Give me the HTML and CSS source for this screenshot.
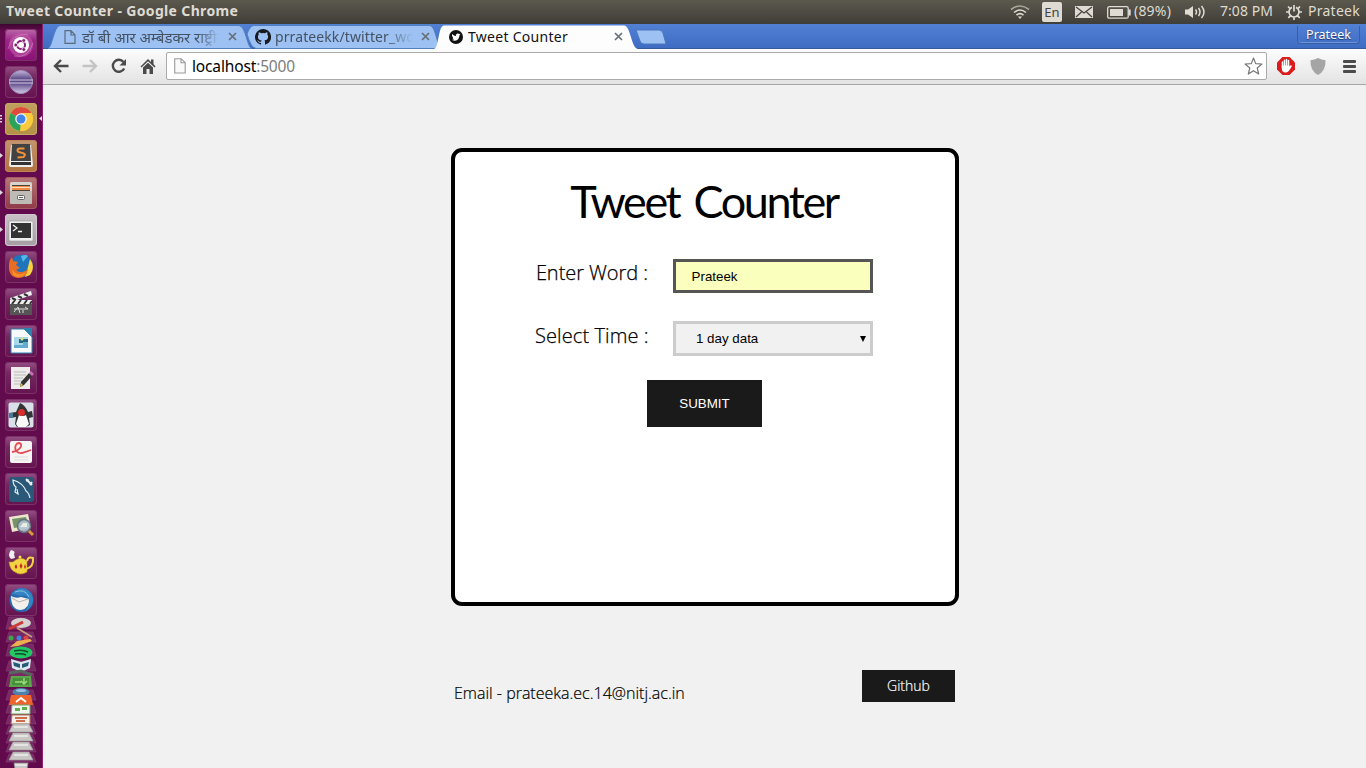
FILE: index.html
```html
<!DOCTYPE html>
<html lang="en">
<head>
<meta charset="utf-8">
<title>Tweet Counter</title>
<link rel="stylesheet" href="styles.css">
</head>
<body>
<div class="desktop">
<header class="panel">
  <span class="panel-title">Tweet Counter - Google Chrome</span>
  <div class="indicators">
    <svg class="i-wifi" width="20" height="16" viewBox="0 0 20 16" fill="none" stroke="#dfdbd2" stroke-width="1.6"><path d="M1 5.5Q10-1.5 19 5.5" stroke="#aaa69d"/><path d="M4 8.5Q10 3.5 16 8.5"/><path d="M6.500 11.200Q10 8.200 13.500 11.200"/><path d="M8 12.500h4l-2 2.500z" fill="#dfdbd2" stroke="none"/></svg>
    <span class="lang">En</span>
    <svg class="i-mail" width="18" height="12" viewBox="0 0 18 12"><rect width="18" height="12" fill="#dfdbd2"/><path d="M1 1l8 6 8-6M1 11l5.500-5M17 11l-5.500-5" fill="none" stroke="#45433d" stroke-width="1.200"/></svg>
    <svg class="i-battery" width="24" height="13" viewBox="0 0 24 13"><rect x=".7" y=".7" width="20.500" height="11.500" rx="1.500" fill="none" stroke="#dfdbd2" stroke-width="1.300"/><rect x="3" y="3" width="13" height="7" fill="#dfdbd2"/><rect x="21.500" y="3.500" width="2.200" height="6" fill="#dfdbd2"/></svg>
    <span class="battery-text">(89%)</span>
    <svg class="i-sound" width="21" height="14" viewBox="0 0 21 14" fill="none" stroke="#dfdbd2" stroke-width="1.500"><path d="M0 4.500h3L8 1v12L3 9.500H0z" fill="#dfdbd2" stroke="none"/><path d="M10.500 4.500Q12.500 7 10.500 9.500M13.500 3Q16.500 7 13.500 11M16.500 1Q21.500 7 16.500 13"/></svg>
    <span class="clock">7:08 PM</span>
    <svg class="i-gear" width="16" height="16" viewBox="0 0 16 16" fill="none" stroke="#dfdbd2" stroke-width="1.700"><path d="M6 3.400A5 5 0 1 0 10 3.400M8 1v6.500M2 2.500l2.200 2.200M14 2.500l-2.200 2.200M0 8h3M13 8h3M2.300 13.800l2.200-2.200M13.700 13.800l-2.200-2.200M8 13v3"/></svg>
    <span class="user">Prateek</span>
  </div>
</header>
<div class="workspace">
<nav class="launcher">
  <div class="tile t-ubuntu"><svg viewBox="0 0 32 32"><circle cx="16" cy="16" r="12" fill="#c15aa9" opacity=".6"/><path d="M3 20Q7 5 23 5M9 27Q23 30 28 14" fill="none" stroke="#d998ca" opacity=".5"/><circle cx="16" cy="16" r="8" fill="#fff"/><circle cx="16" cy="16" r="4" fill="none" stroke="#841b70" stroke-width="2"/><g fill="#841b70" stroke="#fff" stroke-width=".8"><circle cx="10.800" cy="16" r="1.900"/><circle cx="18.800" cy="11.500" r="1.900"/><circle cx="18.800" cy="20.500" r="1.900"/></g></svg></div>
  <div class="tile"><svg viewBox="0 0 32 32"><defs><linearGradient id="ecl" x1="0" y1="0" x2="0" y2="1"><stop stop-color="#c3b8dd"/><stop offset=".4" stop-color="#55427f"/><stop offset=".6" stop-color="#6a5894"/><stop offset="1" stop-color="#d6cdea"/></linearGradient></defs><circle cx="16" cy="16" r="11.500" fill="url(#ecl)" stroke="#9d8ab6"/><path d="M4 14h24M4 17h24" stroke="#d5cbe6"/></svg></div>
  <div class="tile t-chrome"><svg viewBox="0 0 32 32"><circle cx="16" cy="16" r="12" fill="#f9cb3c"/><path d="M16 16L5.600 10A12 12 0 0 1 26.400 10z" fill="#de4b3e"/><path d="M16 16L5.600 10A12 12 0 0 0 15 28z" fill="#2aa45c"/><path d="M16 10h10.400A12 12 0 0 1 15 28l6-9z" fill="#f9cb3c"/><circle cx="16" cy="16" r="5.800" fill="#f4f4f4"/><circle cx="16" cy="16" r="4.500" fill="#4285e8"/></svg></div>
  <div class="tile t-sublime"><svg viewBox="0 0 32 32"><path d="M6 5h20l2 20q0 2-2 2H6q-2 0-2-2z" fill="#eee"/><path d="M7 4h18l1 17H6z" fill="#424242"/><path d="M6 22h20v3H6z" fill="#333"/><path d="M19.500 8.500H15q-2.500 0-2.500 1.800t3 2.200 4 1.500-1 3l-6 .5" fill="none" stroke="#ef933e" stroke-width="2"/></svg></div>
  <div class="tile t-files"><svg viewBox="0 0 32 32"><rect x="5" y="5" width="22" height="10" rx="1.500" fill="#d7d4cd"/><rect x="7" y="8" width="18" height="6" fill="#4b4137"/><path d="M7 9h18v4H7z" fill="#f28b43"/><path d="M7 10.500h18" stroke="#fbe2c1"/><rect x="5" y="14" width="22" height="13" rx="1" fill="#bebbb6"/><rect x="12.500" y="18.500" width="7" height="4" rx="1" fill="#f1f1f0" stroke="#666"/><path d="M14 20.500h4" stroke="#666"/></svg></div>
  <div class="tile t-terminal"><svg viewBox="0 0 32 32"><rect x="4" y="7" width="24" height="20" rx="1" fill="#eee" stroke="#999" stroke-width=".6"/><rect x="6" y="9" width="20" height="15" fill="#333"/><path d="M8 11l4 3-4 3M13 17.500h4" fill="none" stroke="#f4f4f4" stroke-width="1.300"/></svg></div>
  <div class="tile"><svg viewBox="0 0 32 32"><circle cx="16.500" cy="15" r="11.200" fill="#1e75bc"/><path d="M16 5q5-2 7 0l-5 6z" fill="#55b9e8"/><path d="M25 8Q31 16 25 24L20 26 23 16z" fill="#f9d13c"/><path d="M7 6l1 4 5 1-2 3 4 3-4 2q6 5 12-1-1 9-10 9Q3 26 4 14 4 9 7 6z" fill="#e96c25"/><path d="M7 18q4 7 10 5l5-2Q16 29 8 24z" fill="#f69028"/></svg></div>
  <div class="tile"><svg viewBox="0 0 32 32"><rect x="5" y="14" width="22" height="13" fill="#555"/><path d="M5 10L26 3l1 4L6 14z" fill="#eee"/><path d="M5 12h22v4H5z" fill="#eee"/><path d="M7 10l4 2M13 8l4 2M19 6l4 2M7 16l3-4M13 16l3-4M19 16l3-4M25 16l2-3" stroke="#333" stroke-width="2"/><path d="M9 21h14l-3-2M9 24l4-5 2 6M18 22v3" stroke="#ddd" fill="none"/></svg></div>
  <div class="tile"><svg viewBox="0 0 32 32"><path d="M6 4h13l8 8v16H6z" fill="#f7fbfb" stroke="#2b82ac"/><path d="M18 3h9v9z" fill="#2b82ac"/><rect x="9" y="12" width="14" height="11" fill="#a8d9eb"/><path d="M14 14h9v4h-9z" fill="#23657c"/><path d="M9 20h9v-3h5v6H9z" fill="#62acd0"/><circle cx="17" cy="14" r="1.500" fill="#e6df7b"/></svg></div>
  <div class="tile"><svg viewBox="0 0 32 32"><rect x="6" y="5" width="19" height="22" fill="#edecea"/><path d="M9 10h12M9 13h12M9 16h9M9 19h9M9 22h6" stroke="#bbb"/><path d="M15 25l1-5 8-9 3 3-8 9z" fill="#333"/><path d="M24 11l2-2 3 3-2 2z" fill="#ca6eb4"/><path d="M15 25l1-4 2 2z" fill="#e0b946"/></svg></div>
  <div class="tile"><svg viewBox="0 0 32 32"><rect x="3.500" y="3.500" width="25" height="25" rx="2" fill="#d9dfe9"/><path d="M15 4q5 2 8 9l4-1 1 6-4 1 1 7-4 2H12l-2-3 1-7-6 1-1-5 7-1z" fill="#343434"/><path d="M14 16q4 2 7 0l3 9-3 3h-8l-2-3z" fill="#f8f8f8"/><path d="M4 14h4v5H4z" fill="#477a9a"/><circle cx="16.500" cy="13.500" r="3.500" fill="#d72d2b"/></svg></div>
  <div class="tile"><svg viewBox="0 0 32 32"><rect x="5" y="5" width="22" height="22" rx="2" fill="#f7f4f4"/><path d="M7 16c8-1 12-8 7-9-5 0-6 11 3 10l9-3" fill="none" stroke="#e64a54" stroke-width="1.800"/><path d="M9 21h14M9 24h14" stroke="#ddd"/></svg></div>
  <div class="tile"><svg viewBox="0 0 32 32"><rect x="4" y="4" width="25" height="25" rx="3" fill="#2a5878"/><path d="M25 25q-1-5-4-7-3-8-13-11 0 5 3 7l-1 5 3 2-1-5" fill="none" stroke="#e5eff4" stroke-width="1.200"/><path d="M21 6l6 6M21 8l3-1M25 12l2-3" stroke="#eee" stroke-width="1.800"/></svg></div>
  <div class="tile"><svg viewBox="0 0 32 32"><path d="M4 7l19-3 3 14-19 4z" fill="#ece7cf"/><path d="M7 9l14-2 2 9-14 2z" fill="#759269"/><path d="M23 20l5 5" stroke="#d79a3c" stroke-width="3"/><circle cx="19" cy="16" r="6.500" fill="#b3c3d2" opacity=".9" stroke="#61727e" stroke-width="1.600"/><path d="M15 17h7v-4h-4" fill="#e9eee4"/></svg></div>
  <div class="tile"><svg viewBox="0 0 32 32"><path d="M6 12Q2 8 6 3q5 1 3 4l1 4" fill="#eee"/><path d="M8 15q8-7 14-1v11q-7 4-12 0-5-2-6-10z" fill="#f2d443" stroke="#b9921e" stroke-width=".6"/><path d="M22 14q1-5 6-3 1 9-7 11" fill="none" stroke="#f2d443" stroke-width="2"/><circle cx="15" cy="10" r="1.500" fill="#f6de54"/><path d="M11 17l1.500 3-1.500 2-1.500-2zM16 16l1.500 3-1.500 3-1.500-3zM20 17l1 3-1 2-1-2z" fill="#c62c25"/></svg></div>
  <div class="tile"><svg viewBox="0 0 32 32"><circle cx="16.500" cy="16" r="12" fill="#286aae"/><path d="M6 12q5 3 10 1l8 2q1 9-8 11-10 0-10-14z" fill="#f3f0ec"/><path d="M7 14l7 4 9-3" fill="none" stroke="#b5b0ac"/><path d="M6 10Q17-1 26 9q6 11-6 19 6-9 3-15-4-3-8-1-4-2-9-2z" fill="#3483c3"/><path d="M10 8q10-4 14 5" stroke="#8dc7e5" fill="none"/></svg></div>
  <svg class="stack" width="32" height="153" viewBox="0 0 32 153">
    <g fill="#8b4279" stroke="#9f6391" stroke-width=".7" opacity=".55"><path d="M4 1h24l3 12H1zM4 16h24l3 10H1zM4 28h24l3 12H1zM4 45h24l3 10H1zM4 57h24l3 13H1zM4 74h24l3 10H1zM4 87h24l3 10H1zM4 99h24l3 9H1zM4 110h24l3 8H1zM4 119h24l3 8H1zM4 128h24l3 8H1zM4 138h24l3 8H1z"/></g>
    <ellipse cx="16" cy="7" rx="10" ry="5" fill="#d4d1cf"/><path d="M4 13l14-7" stroke="#ce3837" stroke-width="3"/><path d="M12 12l15 9" stroke="#c49a80" stroke-width="2"/>
    <circle cx="6" cy="22" r="2.500" fill="#3ea44b"/><circle cx="14" cy="22" r="2.500" fill="#3f83df"/><circle cx="21" cy="22" r="2.500" fill="#df4443"/><path d="M5 31l7-6 13-2 2 2-14 5z" fill="#edae4f"/>
    <ellipse cx="16" cy="36.500" rx="11.500" ry="6" fill="#21c863"/><path d="M9 35q8-2 14 1M10 38q7-1 11 1" stroke="#124f2c" stroke-width="1.500" fill="none"/>
    <path d="M6 43l10 3 10-3-1 9-9 4-9-4z" fill="#dce8ed"/><path d="M8 46l7 2v4l-6-2zM24 46l-7 2v4l6-2z" fill="#285a78"/><path d="M4 57l12-2 11 4" stroke="#56675d" stroke-width="3" fill="none"/>
    <path d="M6 60h20l1 11H4z" fill="#5ba648"/><path d="M8 62h16v7H7z" fill="#468e3c"/><path d="M10 66h6M19 62v6M16 65l3 3 3-3" stroke="#9bdb78" stroke-width="1.500" fill="none"/>
    <ellipse cx="16" cy="76" rx="8.500" ry="4" fill="#4b81ab"/><ellipse cx="16" cy="74.500" rx="5" ry="1.500" fill="#99bfe0"/>
    <path d="M6 79h20l2 10H4z" fill="#ed652d"/><path d="M11 86l5-4 5 4" fill="none" stroke="#fff" stroke-width="2"/>
    <path d="M7 89h18v9H6z" fill="#f1f5ef" stroke="#66a36e"/><path d="M10 92h5v3h-5zM17 91h5v3h-5z" fill="#5daf4f"/>
    <path d="M7 99h18v9H6z" fill="#f5efea" stroke="#b86f55"/><path d="M10 102h12M11 105h9" stroke="#cb6d4a" stroke-width="2"/>
    <g fill="#c9c7c5" stroke="#9b9996" stroke-width=".7"><path d="M8 108h16l4 8H4zM8 117h16l4 8H4zM8 126h16l4 8H4zM8 136h16l4 8H4z"/><path d="M9 147h14l-1 6H10z"/></g>
    <path d="M9 111h14M9 120h14M9 129h14M9 139h14M10 149h12" stroke="#efeded" stroke-width="1.500"/>
  </svg>
  <svg class="pips" width="43" height="744" viewBox="0 0 43 744"><g fill="#dfd8dc"><path d="M0 91h2v1.500H0zM0 94h2v1.500H0zM0 97h2v1.500H0zM42 92v5l-3-2.500zM0 129v5l3-2.500zM0 166v5l3-2.500zM0 203v5l3-2.500z"/></g></svg>
</nav>
<section class="browser">
  <div class="tabstrip">
    <div class="tab tab-one"><svg class="shape" width="205" height="25" viewBox="0 0 205 25"><path d="M0 24.500C4 24 6 1.500 12 1.500H191C198 2 199 24 204 24.500z" fill="#9cc1f2" stroke="#527fbf"/></svg>
      <svg class="page-icon" width="12" height="14" viewBox="0 0 12 14"><path d="M1 .7h6L11 5v8.300H1zM7 .7V5h4" fill="none" stroke="#5a6b80" stroke-width="1.200"/></svg>
      <span class="tab-label fade-one">डॉ बी आर अम्बेडकर राष्ट्रीय</span>
      <svg class="close" width="9" height="9" viewBox="0 0 9 9"><path d="M1 1l7 7M8 1L1 8"/></svg></div>
    <div class="tab tab-two"><svg class="shape" width="195" height="25" viewBox="0 0 195 25"><path d="M1 10Q4 1.500 8 1.500H184C190 2 191 24 196 24.500H10Q5 24 1 10z" fill="#9cc1f2" stroke="#527fbf"/></svg>
      <svg class="cat" width="16" height="16" viewBox="0 0 16 16"><path d="M8 0a8 8 0 0 0-2.530 15.590c.4.070.55-.17.550-.38v-1.340c-2.230.48-2.700-1.070-2.700-1.070-.36-.92-.89-1.170-.89-1.170-.73-.5.050-.49.050-.49.810.06 1.230.83 1.230.83.720 1.230 1.880.88 2.340.67.070-.52.280-.88.510-1.080-1.780-.2-3.640-.89-3.640-3.950 0-.87.310-1.590.82-2.150-.08-.2-.36-1.020.08-2.120 0 0 .67-.21 2.200.82a7.660 7.660 0 0 1 4 0c1.530-1.040 2.200-.82 2.200-.82.440 1.100.16 1.920.08 2.120.51.560.82 1.280.82 2.150 0 3.070-1.870 3.750-3.650 3.950.29.250.54.730.54 1.480v2.190c0 .21.150.46.550.38A8 8 0 0 0 8 0z" fill="#171a1f"/></svg>
      <span class="tab-label fade-two">prrateekk/twitter_wo</span>
      <svg class="close" width="9" height="9" viewBox="0 0 9 9"><path d="M1 1l7 7M8 1L1 8"/></svg></div>
    <div class="tab tab-active"><svg class="shape" width="205" height="25" viewBox="0 0 205 25"><path d="M0 25C5 24 4 1.500 10 1.500H190C197 2 197 24 204 25z" fill="#fdfdfd"/></svg>
      <svg class="bird" width="14" height="14" viewBox="0 0 14 14"><circle cx="7" cy="7" r="7" fill="#111"/><path d="M3 4q2 2 4 2-.5-2.600 2-2.600l1.300.5 1.200-.2-.9 1.400Q10 11 5.500 10.700L3 10l2-.8Q3 8.500 4 7.500L3 6z" fill="#fff"/></svg>
      <span class="tab-label">Tweet Counter</span>
      <svg class="close" width="9" height="9" viewBox="0 0 9 9"><path d="M1 1l7 7M8 1L1 8"/></svg></div>
    <svg class="new-tab" width="32" height="16" viewBox="0 0 32 16"><path d="M1 1h23q3 0 4 3l3 11H9q-3 0-4-3z" fill="#9cc1f2" stroke="#4c78bd"/></svg>
    <span class="profile">Prateek</span>
  </div>
  <div class="toolbar">
    <svg class="back" width="16" height="14" viewBox="0 0 16 14" fill="none" stroke="#4a4a4a" stroke-width="2.400"><path d="M8 1L2 7l6 6M2 7h13.500"/></svg>
    <svg class="forward" width="16" height="14" viewBox="0 0 16 14" fill="none" stroke="#c4c4c4" stroke-width="2.400"><path d="M8 1l6 6-6 6M14 7H.5"/></svg>
    <svg class="reload" width="16" height="16" viewBox="0 0 16 16"><path d="M13.200 10.500A6 6 0 1 1 12.500 4" fill="none" stroke="#4a4a4a" stroke-width="2.400"/><path d="M15 1v6.500H8.500z" fill="#4a4a4a"/></svg>
    <svg class="home" width="16" height="16" viewBox="0 0 16 16" fill="#4a4a4a"><path d="M.5 8.500L8 1l3 3V1.500h2.500V6L15.500 8.500l-1 1L8 3.300 1.500 9.500zM3 9.500l5-4.800 5 4.800V16H9.500v-5h-3v5H3z"/></svg>
    <div class="address">
      <svg width="12" height="16" viewBox="0 0 12 16"><path d="M.7.700h6.500l4 4V15H.7zM7 .7v4h4" fill="#fafafa" stroke="#999" stroke-width="1.100"/></svg>
      <span class="url">localhost<span class="port">:5000</span></span>
      <svg class="star" width="19" height="18" viewBox="0 0 19 18"><path d="M9.500 1l2.200 5.600 6.200.4-4.700 4 1.500 6-5.200-3.300L4.300 17l1.500-6L1.100 7l6.200-.4z" fill="#fff" stroke="#777" stroke-width="1.200" stroke-linejoin="round"/></svg>
    </div>
    <svg class="stop" width="18" height="18" viewBox="0 0 18 18"><path d="M5.500 0h7L18 5.500v7L12.500 18h-7L0 12.500v-7z" fill="#dc1b1c"/><g fill="none" stroke="#fff" stroke-width="1.500" stroke-linecap="round"><path d="M5.500 5v5M7.500 3.200V9M9.500 2.500V9M11.500 3.500V10M12.500 11.500L14 9"/></g><path d="M4.800 8.500h7.500L13 10l.5.500q-1.500 5-5 5-3.700 0-3.700-4z" fill="#fff"/></svg>
    <svg class="shield" width="16" height="17" viewBox="0 0 16 17"><path d="M8 0q3.500 2 7.500 2.300Q16 13 8 17 0 13 .5 2.300 4.500 2 8 0z" fill="#a5a5a5"/></svg>
    <svg class="menu" width="13" height="13" viewBox="0 0 13 13" fill="#4b4b4b"><rect width="13" height="3" rx="1"/><rect y="5" width="13" height="3" rx="1"/><rect y="10" width="13" height="3" rx="1"/></svg>
  </div>
  <main class="page">
    <form class="card">
      <h1>Tweet Counter</h1>
      <div class="field first"><label for="word">Enter Word :</label><input id="word" type="text" value="Prateek"></div>
      <div class="field second"><label class="l-time" for="time">Select Time :</label><div class="select" id="time"><span>1 day data</span><svg width="6" height="6" viewBox="0 0 6 6"><path d="M0 0h6L3 6z"/></svg></div></div>
      <button type="button">SUBMIT</button>
    </form>
    <footer><span class="email">Email - prateeka.ec.14@nitj.ac.in</span><a class="github">Github</a></footer>
  </main>
</section>
</div>
</div>
</body>
</html>
```
FILE: styles.css
```css
* { box-sizing: border-box; }
body { margin: 0; width: 1366px; height: 768px; overflow: hidden; font-family: "Noto Sans", "Open Sans", sans-serif; }
svg { display: block; flex: none; }
.panel { height: 24px; display: flex; align-items: center; justify-content: space-between; padding: 0 5px 0 6px; background: linear-gradient(#5b584e, #403e38); color: #dfdbd2; }
.panel-title { font-size: 14px; font-weight: 700; letter-spacing: .35px; line-height: 20px; padding-bottom: 2px; }
.indicators { display: flex; align-items: center; font-size: 14px; white-space: nowrap; }
.battery-text, .clock, .user { line-height: 20px; padding-bottom: 2px; }
.lang { width: 20px; height: 20px; margin: 0 13px 0 12px; background: #dfdbd2; color: #45433d; border-radius: 2px; text-align: center; font-size: 13px; line-height: 20px; }
.i-battery { margin: 0 3px 0 14px; }
.battery-text { width: 38px; letter-spacing: .2px; }
.i-sound { margin: 0 14px 0 13px; }
.clock { width: 54px; letter-spacing: .05px; }
.i-gear { margin: 0 6px 0 12px; }
.user { width: 53px; letter-spacing: .25px; }
.workspace { display: flex; height: 744px; }
.launcher { position: relative; width: 43px; display: flex; flex-direction: column; align-items: flex-start; gap: 5px; padding: 5px 0 0 5px; background: linear-gradient(#3f0732, #620a4d 7px, #610b4c); border-right: 1px solid #8c1e70; overflow: hidden; }
.tile { flex: none; width: 32px; height: 32px; border-radius: 4px; background: linear-gradient(#955085, #73285f 35%, #66134f); box-shadow: inset 0 0 0 1px #7c3169; }
.tile svg { width: 32px; height: 32px; }
.t-ubuntu { background: linear-gradient(#bd6bad, #9c2586 35%, #8a1277); }
.t-chrome { background: linear-gradient(#c0a060, #b49145); box-shadow: inset 0 0 0 1px #c3a762; }
.t-sublime { background: linear-gradient(#c29671, #b1713e); box-shadow: inset 0 0 0 1px #c08557; }
.t-files { background: linear-gradient(#b77878, #8f3947); box-shadow: inset 0 0 0 1px #a65962; }
.t-terminal { background: linear-gradient(#c8c1c6, #a69da5); box-shadow: inset 0 0 0 1px #cec7cc; }
.launcher .stack { margin-top: -5px; }
.pips { position: absolute; left: 0; top: 0; }
.browser { flex: 1; display: flex; flex-direction: column; min-width: 0; }
.tabstrip { height: 25px; flex: none; display: flex; background: linear-gradient(#5180d4, #3e6cc3); border-bottom: 1px solid #36599c; }
.tab { position: relative; height: 25px; display: flex; align-items: center; flex: none; font-size: 14px; white-space: nowrap; }
.tab > * { position: relative; }
.tab .shape { position: absolute; left: 0; top: 0; }
.tab-one { width: 198px; margin-left: 5px; padding-left: 16px; color: #455263; }
.tab-two { width: 190px; padding-left: 9px; color: #455263; }
.tab-active { width: 205px; margin-left: -2px; padding-left: 15px; color: #111; z-index: 2; }
.tab-label { overflow: hidden; height: 22px; line-height: 22px; }
.fade-one { width: 137px; margin-left: 6px; font-size: 15px; -webkit-mask-image: linear-gradient(90deg, #000 84%, transparent); mask-image: linear-gradient(90deg, #000 84%, transparent); }
.tab-one .close { margin-left: 9px; }
.fade-two { width: 138px; margin-left: 4px; letter-spacing: .1px; -webkit-mask-image: linear-gradient(90deg, #000 80%, transparent); mask-image: linear-gradient(90deg, #000 80%, transparent); }
.tab-two .close { margin-left: 8px; }
.tab-active .tab-label { width: 142px; margin-left: 5px; letter-spacing: .28px; }
.tab-active .close { margin-left: 4px; }
.close { fill: none; stroke: #666e78; stroke-width: 1.7; }
.new-tab { margin: 5px 0 0 -4px; z-index: 3; }
.profile { margin: 2px 6px 0 auto; width: 63px; height: 18px; border: 1px solid #345fa9; border-top: 0; border-radius: 0 0 4px 4px; color: #fff; font-size: 12.5px; line-height: 18px; text-align: center; text-shadow: 0 1px 1px #173467; box-shadow: inset 0 -1px #6e94d6; }
.toolbar { height: 36px; flex: none; display: flex; align-items: center; padding: 0 10px 1px; background: linear-gradient(#fcfcfc, #e3e3e3); border-bottom: 1px solid #a8a8a8; }
.forward { margin-left: 13px; }
.reload { margin-left: 13px; }
.home { margin-left: 13px; }
.address { display: flex; align-items: center; width: 1101px; height: 28px; margin-left: 10px; padding: 0 3px 0 7px; border: 1px solid #aaa; border-radius: 2px; background: #fff; }
.url { margin-left: 6px; font-size: 15.5px; line-height: 24px; letter-spacing: -.15px; color: #000; }
.port { color: #7c7c7c; }
.star { margin-left: auto; }
.stop { margin-left: 10px; }
.shield { margin-left: 15px; }
.menu { margin-left: 17px; }
.page { flex: 1; padding-top: 63px; background: #f1f1f1; color: #000; }
.card { width: 508px; height: 458px; margin: 0 auto 0 408px; border: 4px solid #000; border-radius: 11px; background: #fff; display: flex; flex-direction: column; align-items: center; }
h1 { margin: 21px 0 0; height: 58px; font: 400 45px/56px Lato, sans-serif; letter-spacing: -2.4px; word-spacing: 5px; text-indent: -2px; white-space: nowrap; }
.field { align-self: stretch; display: flex; }
.field label { width: 113px; margin: 0 25px 0 80px; font: 300 20px/28px "Open Sans", sans-serif; letter-spacing: -.05px; -webkit-text-stroke: .25px #000; white-space: nowrap; text-align: right; }
.field .l-time { margin-top: 1px; letter-spacing: .1px; }
.first { margin-top: 28px; height: 34px; }
.second { margin-top: 28px; height: 35px; }
input, .select { width: 200px; font: 13.333px "Liberation Sans", sans-serif; color: #000; }
input { height: 34px; padding: 0 15px; border: 3px solid #555; border-radius: 0; background: #faffbd; outline: 0; text-indent: .6px; }
.select { height: 35px; padding: 0 4px 0 20px; display: flex; align-items: center; justify-content: space-between; border: 3px solid #ccc; background: #f1f1f1; }
button { width: 115px; height: 47px; margin: 24px 1px 0 0; padding: 0; border: 0; background: #1a1a1a; color: #fff; font: 13.333px "Liberation Sans", sans-serif; }
footer { width: 504px; margin: 64px 0 0 411px; display: flex; justify-content: space-between; font: 300 16px/24px "Open Sans", sans-serif; }
.email { margin-top: 11px; letter-spacing: 0; -webkit-text-stroke: .2px #000; white-space: nowrap; }
.github { width: 93px; height: 32px; margin-right: 3px; background: #1a1a1a; color: #fff; font-size: 14px; line-height: 32px; text-align: center; -webkit-text-stroke: .2px #fff; }
```
